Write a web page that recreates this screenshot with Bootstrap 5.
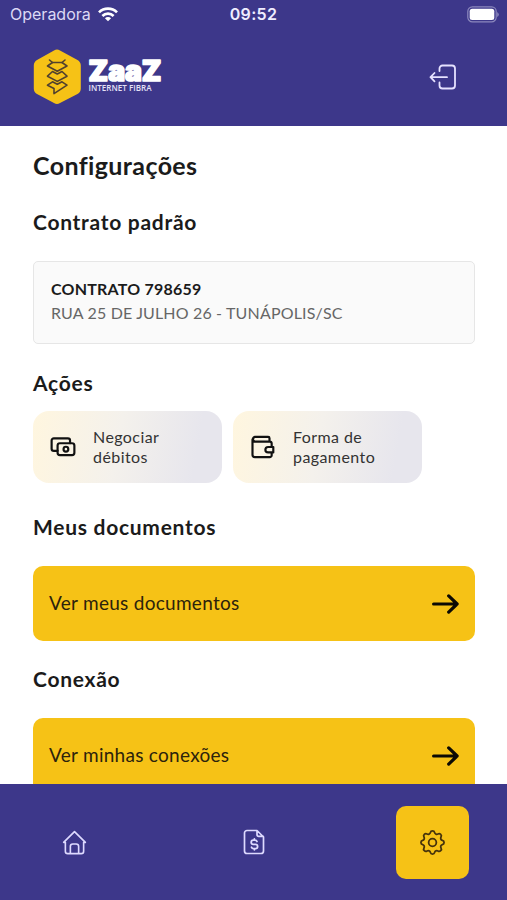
<!DOCTYPE html>
<html lang="pt-BR">
<head>
<meta charset="utf-8">
<meta name="viewport" content="width=device-width, initial-scale=1">
<title>Configurações</title>
<link rel="stylesheet" href="https://cdn.jsdelivr.net/npm/bootstrap@5.3.0/dist/css/bootstrap.min.css">
<style>
  :root { --brand: #3d378a; --sun: #f6c216; --ink: #1b1b1b; }
  body { font-family: Lato, "Noto Sans", sans-serif; color: var(--ink); }
  svg { display: block; flex: none; }
  .brand-bg { background: var(--brand); }
  .app-header { height: 126px; }
  .status-bar { height: 29px; padding: 0 8px 0 10px; font: 400 16px/29px Inter, sans-serif; color: #dcd9f5; }
  .status-bar .clock { font-weight: 600; color: #efedff; letter-spacing: .35px; }
  .status-bar .carrier-group { gap: 7px; }
  .header-row { padding: 20px 50px 0 33px; }
  .app-main { padding: 23px 32px 0 33px; }
  .screen-title { font-size: 25px; line-height: 32px; letter-spacing: .38px; margin-bottom: 26px; }
  .section-title { font-size: 21px; line-height: 30px; letter-spacing: .72px; margin: 0; }
  .contract { margin: 24px 0 24px; height: 83px; padding: 15px 17px; background: #fafafa; border: 1px solid #e6e6e6; border-radius: 5px; font-size: 16px; line-height: 24px; letter-spacing: .16px; }
  .contract-name { letter-spacing: .22px; }
  .contract-address { color: #666; }
  .actions { gap: 11px; margin: 13px 0 29px; }
  .action { width: 189px; height: 72px; border-radius: 16px; padding-left: 17px; gap: 17px; background: linear-gradient(100deg, #fff6df, #f4f1ec 45%, #e7e6ed 85%); color: #333; font-size: 16px; line-height: 20px; letter-spacing: .42px; }
  .go { height: 75px; padding: 0 16px; background: var(--sun); border-radius: 10px; color: #2c230c; font-size: 19px; letter-spacing: .28px; }
  .gap-below { margin-bottom: 23px; }
  .tab-bar { height: 116px; padding: 0 38px; }
  .tab { width: 73px; height: 73px; border-radius: 10px; }
  .tab.current { background: var(--sun); }
</style>
<script src="https://cdn.jsdelivr.net/npm/bootstrap@5.3.0/dist/js/bootstrap.bundle.min.js"></script>
</head>
<body class="d-flex flex-column vh-100 overflow-hidden bg-white">
<header class="app-header brand-bg flex-shrink-0">
  <div class="status-bar d-flex justify-content-between position-relative">
    <div class="carrier-group d-flex align-items-center"><span class="carrier">Operadora</span>
      <svg width="20" height="15" viewBox="0 0 20 15" fill="none" stroke="#fff" stroke-width="2.7"><path d="M1 5.4a12.8 12.8 0 0 1 18 0M4.400 9a8 8 0 0 1 11.200 0"/><path d="M10 14.3 6.9 11.2a4.4 4.4 0 0 1 6.2 0z" fill="#fff" stroke="none"/></svg>
    </div>
    <span class="clock position-absolute start-50 translate-middle-x">09:52</span>
    <svg class="align-self-center" width="32" height="17" viewBox="0 0 32 17"><rect x=".8" y=".8" width="28.400" height="15" rx="4.600" fill="none" stroke="#8c88bd" stroke-width="1.200"/><rect x="2.700" y="2.700" width="24.600" height="11.200" rx="2.500" fill="#fff"/><path d="M30.200 6v5q1.600-1 1.600-2.500T30.200 6" fill="#8c88bd"/></svg>
  </div>
  <div class="header-row d-flex justify-content-between align-items-center">
    <svg width="132" height="56" viewBox="0 0 132 56" role="img" aria-label="ZaaZ Internet Fibra">
      <path d="M21 1.500q3-1.800 6 0l17.500 9.500q3.300 2 3.300 5.500v23q0 3.500-3.300 5.500L27 54q-3 1.800-6 0L4 45q-3.200-2-3.200-5.500v-23Q.800 13 4 11z" fill="#f6c216"/>
      <g fill="none" stroke="#51412e" stroke-width="1.600" stroke-linejoin="round" stroke-linecap="round">
        <path d="M16.500 11l3 2.500h9.500l3-2.500"/>
        <path d="M19.500 13.500 14.500 17 24.300 22.200 34 17 29 13.500"/>
        <path d="M19.500 22.500 14.500 27.200 24.300 32.400 34 27.200 29 22.500 24.300 25z"/>
        <path d="M19.500 32.800 14.500 36.200 21 39.500v5.200L34 36.200 29 32.800 24.300 35.300z"/>
      </g>
      <text x="55.500" y="31.800" textLength="73" lengthAdjust="spacingAndGlyphs" font-family="Inter, sans-serif" font-weight="900" font-size="28" fill="#fff" stroke="#fff" stroke-width="1.700" stroke-linejoin="round">ZaaZ</text>
      <text x="55.500" y="42.300" textLength="63" lengthAdjust="spacingAndGlyphs" font-family="Open Sans, sans-serif" font-weight="600" font-size="8" fill="#e4e1f6">INTERNET FIBRA</text>
    </svg>
    <svg width="28" height="26" viewBox="0 0 28 26" fill="none" stroke="#e6e2ff" stroke-width="1.800" stroke-linecap="round" stroke-linejoin="round"><path d="M10.500 7V4.500a3 3 0 0 1 3-3h9.500a3 3 0 0 1 3 3v17a3 3 0 0 1-3 3h-9.500a3 3 0 0 1-3-3V18.500M18 13.200H1.500M5.500 9l-4 4.200 4 4.200"/></svg>
  </div>
</header>

<main class="app-main flex-grow-1 overflow-hidden">
  <h1 class="screen-title fw-bold">Configurações</h1>
  <h2 class="section-title fw-bold">Contrato padrão</h2>
  <div class="contract">
    <div class="fw-bold contract-name">CONTRATO 798659</div>
    <div class="contract-address">RUA 25 DE JULHO 26 - TUNÁPOLIS/SC</div>
  </div>
  <h2 class="section-title fw-bold">Ações</h2>
  <div class="actions d-flex">
    <div class="action d-flex align-items-center">
      <svg width="26" height="26" viewBox="0 0 24 24" fill="none" stroke="#111" stroke-width="2" stroke-linecap="round" stroke-linejoin="round"><rect x="7" y="8.500" width="15.500" height="11" rx="2.200"/><circle cx="14.700" cy="14" r="2.200"/><path d="M18.500 8.500V6a2 2 0 0 0-2-2h-13a2 2 0 0 0-2 2v7.500a2 2 0 0 0 2 2H7"/></svg>
      <span>Negociar<br>débitos</span>
    </div>
    <div class="action d-flex align-items-center">
      <svg width="26" height="26" viewBox="0 0 24 24" fill="none" stroke="#111" stroke-width="2" stroke-linecap="round" stroke-linejoin="round"><path d="M18 7V4a1.300 1.300 0 0 0-1.300-1.300H4.500a2.200 2.200 0 0 0 0 4.300h13.700A1.800 1.800 0 0 1 20 8.800v3M20 17.500v2a1.800 1.800 0 0 1-1.800 1.800H4.500a2.200 2.200 0 0 1-2.200-2.200V5"/><path d="M21.500 12v5h-4.800a2.500 2.500 0 0 1 0-5z"/></svg>
      <span>Forma de<br>pagamento</span>
    </div>
  </div>
  <h2 class="section-title fw-bold">Meus documentos</h2>
  <div class="go gap-below d-flex align-items-center justify-content-between mt-4">
    <span>Ver meus documentos</span>
    <svg width="27" height="20" viewBox="0 0 27 20" fill="none" stroke="#0c0a04" stroke-width="3.200" stroke-linecap="round" stroke-linejoin="round"><path d="M1.600 10h23.500M16.700 1.900l8.400 8.100-8.400 8.100"/></svg>
  </div>
  <h2 class="section-title fw-bold">Conexão</h2>
  <div class="go d-flex align-items-center justify-content-between mt-4">
    <span>Ver minhas conexões</span>
    <svg width="27" height="20" viewBox="0 0 27 20" fill="none" stroke="#0c0a04" stroke-width="3.200" stroke-linecap="round" stroke-linejoin="round"><path d="M1.600 10h23.500M16.700 1.900l8.400 8.100-8.400 8.100"/></svg>
  </div>
</main>

<nav class="tab-bar brand-bg flex-shrink-0 d-flex align-items-center justify-content-between">
  <div class="tab d-flex align-items-center justify-content-center">
    <svg width="25" height="25" viewBox="0 0 26 26" fill="none" stroke="#dedaff" stroke-width="1.700" stroke-linecap="round" stroke-linejoin="round"><path d="M3.500 12.800H1.700L13 1.700l11.300 11.100h-1.800v9.200a2.500 2.500 0 0 1-2.500 2.500H6A2.500 2.500 0 0 1 3.500 22zM8.700 24.500V17a2.500 2.500 0 0 1 2.500-2.500h3.600a2.500 2.500 0 0 1 2.500 2.500v7.500"/></svg>
  </div>
  <div class="tab d-flex align-items-center justify-content-center">
    <svg width="22" height="26" viewBox="0 0 22 26" fill="none" stroke="#dedaff" stroke-width="1.700" stroke-linecap="round" stroke-linejoin="round"><path d="M14 1.500v4A1.800 1.800 0 0 0 15.800 7.300h4.500M14 1.500H4A2.500 2.500 0 0 0 1.500 4v18A2.500 2.500 0 0 0 4 24.500h14a2.500 2.500 0 0 0 2.500-2.500V8z"/><path stroke-width="1.800" d="M14 12.500q-.5-1.300-2-1.300h-1.700a2.100 2.100 0 0 0 0 4.200h2.200a2.100 2.100 0 0 1 0 4.200H10.500q-1.500 0-2-1.300M11.400 10v1.200M11.400 19.600v1.200"/></svg>
  </div>
  <div class="tab current d-flex align-items-center justify-content-center">
    <svg width="27" height="27" viewBox="1.500 1.500 21 21" fill="none" stroke="#46330c" stroke-width="1.400" stroke-linecap="round" stroke-linejoin="round"><path d="M10.325 4.317c.426-1.756 2.924-1.756 3.350 0a1.724 1.724 0 0 0 2.573 1.066c1.543-.94 3.310.826 2.370 2.370a1.724 1.724 0 0 0 1.065 2.572c1.756.426 1.756 2.924 0 3.350a1.724 1.724 0 0 0-1.066 2.573c.94 1.543-.826 3.310-2.370 2.370a1.724 1.724 0 0 0-2.572 1.065c-.426 1.756-2.924 1.756-3.350 0a1.724 1.724 0 0 0-2.573-1.066c-1.543.94-3.310-.826-2.370-2.370a1.724 1.724 0 0 0-1.065-2.572c-1.756-.426-1.756-2.924 0-3.350a1.724 1.724 0 0 0 1.066-2.573c-.94-1.543.826-3.310 2.370-2.370 1 .608 2.296.07 2.572-1.065z"/><circle cx="12" cy="12" r="3"/></svg>
  </div>
</nav>
</body>
</html>
